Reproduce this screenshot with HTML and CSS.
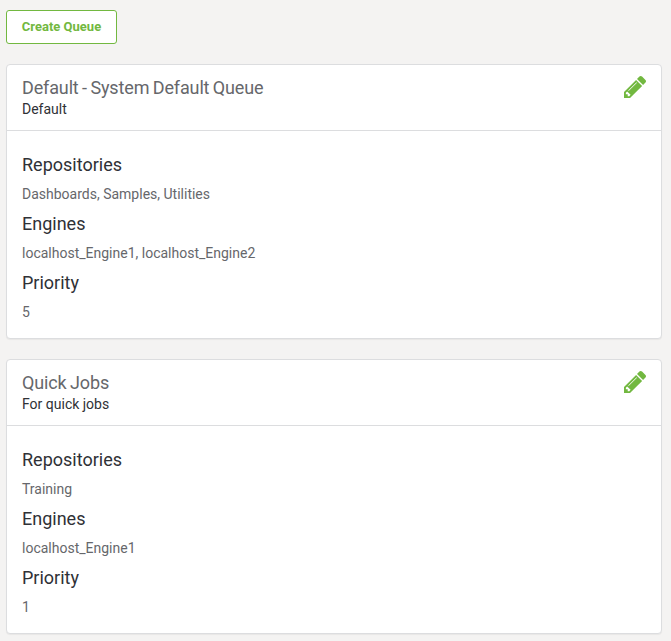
FILE: index.html
```html
<!DOCTYPE html>
<html lang="en">
<head>
<meta charset="utf-8">
<title>Queues</title>
<link rel="stylesheet" href="styles.css">
</head>
<body>
<svg class="sprite" aria-hidden="true">
  <symbol id="pencil" viewBox="0 149 1515 1515">
    <path d="M363 1536l91-91-235-235-91 91v107h128v128h107zm523-928q0-22-22-22-10 0-17 7l-542 542q-7 7-7 17 0 22 22 22 10 0 17-7l542-542q7-7 7-17zm-54-192l416 416-832 832h-416v-416zm683 96q0 53-37 90l-166 166-416-416 166-165q36-38 90-38 53 0 91 38l235 234q37 39 37 91z"/>
  </symbol>
</svg>
<button class="create" type="button">Create Queue</button>
<section class="card">
  <header class="card-header">
    <div>
      <h3 class="title">Default - System Default Queue</h3>
      <p class="subtitle">Default</p>
    </div>
    <svg class="edit"><use href="#pencil"/></svg>
  </header>
  <div class="card-body">
    <h4 class="label">Repositories</h4>
    <p class="value">Dashboards, Samples, Utilities</p>
    <h4 class="label">Engines</h4>
    <p class="value">localhost_Engine1, localhost_Engine2</p>
    <h4 class="label">Priority</h4>
    <p class="value">5</p>
  </div>
</section>
<section class="card">
  <header class="card-header">
    <div>
      <h3 class="title">Quick Jobs</h3>
      <p class="subtitle">For quick jobs</p>
    </div>
    <svg class="edit"><use href="#pencil"/></svg>
  </header>
  <div class="card-body">
    <h4 class="label">Repositories</h4>
    <p class="value">Training</p>
    <h4 class="label">Engines</h4>
    <p class="value">localhost_Engine1</p>
    <h4 class="label">Priority</h4>
    <p class="value">1</p>
  </div>
</section>
</body>
</html>
```
FILE: styles.css
```css
* { box-sizing: border-box; }
body {
  margin: 0;
  padding: 10px 9px 0 6px;
  background: #f4f3f2;
  color: #66676b;
  font: 14px/20px Roboto, sans-serif;
  overflow: hidden;
}
h3, h4, p { margin: 0; font-weight: 400; }
.sprite { display: none; }
.create {
  display: block;
  width: 111px;
  height: 34px;
  margin-bottom: 20px;
  padding: 0;
  border: 1px solid #72b840;
  border-radius: 3px;
  background: #fff;
  color: #72b840;
  font: 700 13px/20px Roboto, sans-serif;
}
.card {
  height: 275px;
  margin-bottom: 20px;
  border: 1px solid #dcdddf;
  border-radius: 4px;
  background: #fff;
  box-shadow: 0 1px 1px rgba(0, 0, 0, .05);
}
.card-header {
  display: flex;
  justify-content: space-between;
  height: 66px;
  padding: 11px 15px 0;
  border-bottom: 1px solid #dcdddf;
}
.title {
  margin-top: 1px;
  font-size: 18px;
  line-height: 22px;
  letter-spacing: -.14px;
  word-spacing: -.85px;
}
.subtitle { color: #2f3136; line-height: 20px; }
.edit { width: 22px; height: 22px; fill: #72b840; }
.card-body { padding: 24px 15px 0; }
.label { color: #2f3136; font-size: 18px; line-height: 20px; }
.value { margin: 9px 0 10px; }
```
